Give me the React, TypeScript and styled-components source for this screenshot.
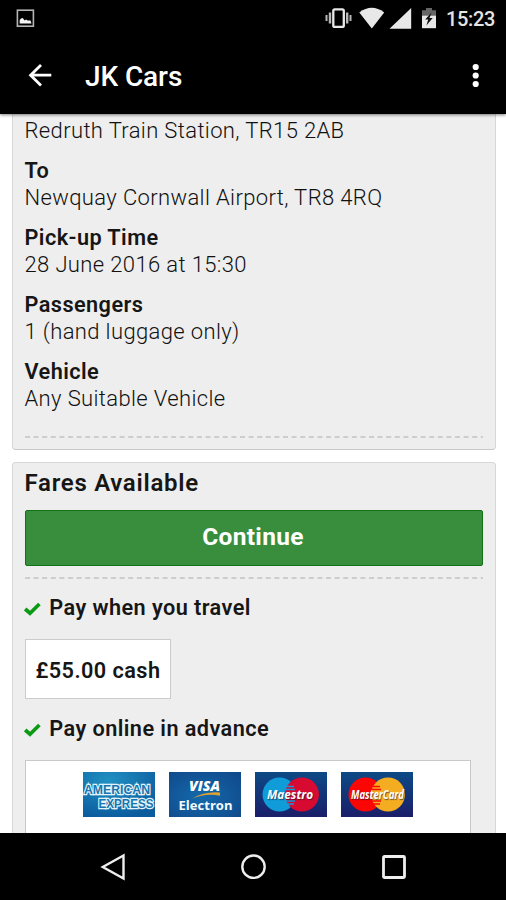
import React from "react";
import styled, { createGlobalStyle } from "styled-components";

const GlobalStyle = createGlobalStyle`
  * { box-sizing: border-box; }
  body { margin: 0; background: #fff; font-family: Roboto, "Liberation Sans", sans-serif; }
`;

const Screen = styled.div`
  width: 506px;
  height: 900px;
  display: flex;
  flex-direction: column;
  overflow: hidden;
  background: #fff;
`;

const StatusBar = styled.div`
  height: 37px;
  flex: none;
  display: flex;
  align-items: center;
  justify-content: space-between;
  padding: 0 11px 0 16px;
  background: #000;
`;

const StatusIcons = styled.div`
  display: flex;
  align-items: center;
  height: 37px;
  svg { display: block; }
`;

const Clock = styled.span`
  margin-left: 9px;
  padding-top: 1px;
  color: #e4e4e4;
  font-size: 20px;
  line-height: 24px;
  font-weight: 500;
  letter-spacing: -0.35px;
`;

const AppBar = styled.header`
  height: 77px;
  flex: none;
  display: flex;
  align-items: center;
  padding: 0 24px 0 28px;
  background: #000;
  z-index: 1;
  box-shadow: 0 1px 3px rgba(0, 0, 0, 0.5);
`;

const IconButton = styled.button`
  display: flex;
  padding: 0;
  border: 0;
  background: none;
  svg { display: block; }
`;

const AppTitle = styled.h1`
  flex: 1;
  margin: 3px 0 0 32px;
  color: #fff;
  font-size: 28px;
  font-weight: 500;
  line-height: 32px;
  letter-spacing: -0.1px;
`;

const Content = styled.main`
  height: 719px;
  flex: none;
  display: flex;
  flex-direction: column;
  gap: 12px;
  padding: 0 10px 0 12px;
  overflow: hidden;
`;

const Card = styled.section<{ $continued?: boolean }>`
  flex: none;
  height: ${(p) => (p.$continued ? "336px" : "400px")};
  padding: ${(p) => (p.$continued ? "3px 12px 0" : "6px 12px 0")};
  background: #eee;
  border: 1px solid #d6d6d6;
  border-top-width: ${(p) => (p.$continued ? 0 : "1px")};
  border-bottom-color: #c8c8c8;
  border-radius: ${(p) => (p.$continued ? "0 0 4px 4px" : "4px")};
`;

const Detail = styled.div`
  display: flex;
  flex-direction: column;
  margin: 0 0 13px -0.5px;
`;

const Label = styled.strong`
  font-size: 21.7px;
  font-weight: 600;
  line-height: 27px;
  color: #161616;
  letter-spacing: 0.43px;
`;

const Value = styled.span`
  font-size: 22px;
  font-weight: 350;
  line-height: 27px;
  color: #111;
  white-space: nowrap;
  letter-spacing: 0.37px;
`;

const DashedRule = styled.svg<{ $offset?: number }>`
  display: block;
  width: 458px;
  height: 2px;
  margin-top: ${(p) => p.$offset ?? 0}px;
`;

const SectionTitle = styled.h2`
  margin: 0 0 0 -0.5px;
  color: #161616;
  font-size: 24px;
  font-weight: 600;
  line-height: 28px;
  letter-spacing: 0.72px;
`;

const ContinueButton = styled.button`
  display: block;
  width: 458px;
  height: 56px;
  margin: 13px 0 11px;
  padding: 0 2px 3px 0;
  background: #388e3c;
  border: 1px solid #117316;
  border-radius: 2px;
  color: #fff;
  font: 700 24.5px/28px Roboto, sans-serif;
  letter-spacing: 0.3px;
`;

const PayOption = styled.div`
  display: flex;
  align-items: center;
  gap: 8px;
  margin-left: -0.7px;
  svg { display: block; margin-top: 2px; }
`;

const Payments = styled.div`
  display: flex;
  flex-direction: column;
  padding-top: 15px;
`;

const CashFare = styled.div`
  width: 146px;
  height: 60px;
  margin: 18px 0 16px;
  display: flex;
  align-items: center;
  justify-content: center;
  padding-top: 2px;
  background: #fff;
  border: 1px solid #ccc;
`;

const PaymentCards = styled.div`
  width: 446px;
  height: 90px;
  margin-top: 18px;
  display: flex;
  gap: 14px;
  padding: 11px 0 0 57px;
  background: #fff;
  border: 1px solid #c8c8c8;
  svg { display: block; }
`;

const CardName = styled.text`
  font: italic 700 12px "Open Sans", sans-serif;
  fill: #fff;
  text-shadow: 1px 1px 1px rgba(20, 20, 40, 0.6);
`;

const NavBar = styled.nav`
  height: 67px;
  flex: none;
  display: flex;
  justify-content: space-between;
  align-items: center;
  padding: 0 99px;
  background: #000;
`;

const Rule = ({ offset }: { offset?: number }) => (
  <DashedRule $offset={offset}>
    <line x1="0" y1="1" x2="458" y2="1" stroke="#c2c2c2" strokeWidth="1.6" strokeDasharray="5 3.6" />
  </DashedRule>
);

const Check = () => (
  <svg width="17" height="14" viewBox="0 0 17 14">
    <path d="M1.2 7 L6 11.2 L15.4 2" fill="none" stroke="#0b9a14" strokeWidth="3.7" />
  </svg>
);

const PictureIcon = () => (
  <svg width="19" height="19" viewBox="0 0 19 19">
    <rect x="1.4" y="1.2" width="16" height="16" fill="none" stroke="#b4b4b4" strokeWidth="1.6" />
    <path d="M3.7 14.5 V11 L5 9.5 L6.7 9 L8.7 11.5 L10 10.5 L11.5 11.5 H14.5 L15.5 14.5 Z" fill="#f4f4f4" />
  </svg>
);

const SystemIcons = () => (
  <svg width="114" height="37" viewBox="323 0 114 37" fill="#e8e8e8">
    <path d="M325.5 15h2v6h-2zM328.8 12.5h2.4v11h-2.4zM346 12.5h2.4v11H346zM349.5 15h2v6h-2z" fill="#b8b8b8" />
    <rect x="333.3" y="9.4" width="10.5" height="17.5" rx="1.5" fill="none" stroke="#e8e8e8" strokeWidth="2.3" />
    <path d="M359.3 12.4Q371.8 3.2 384.2 12.4L371.8 28.5Z" />
    <path d="M411.2 8V28.7H389.5Z" />
    <path d="M426 8h6v2.2h4v5.3h-14v-5.3h4z" fill="#666" />
    <path d="M422 15.5h14v12.7h-14z" />
    <path d="M431.5 12.5L425.2 19.4h3l-1.8 6 6.3-7.4h-3.2z" fill="#111" />
  </svg>
);

const AmexCard = () => (
  <svg width="72" height="45" viewBox="0 0 72 45">
    <defs>
      <radialGradient id="amex" cx="35%" cy="20%" r="85%">
        <stop offset="0" stopColor="#2090c2" />
        <stop offset="1" stopColor="#0b5b9d" />
      </radialGradient>
    </defs>
    <rect width="72" height="45" fill="url(#amex)" />
    <g
      fontFamily="Liberation Sans, Arial, sans-serif"
      fontWeight="700"
      fontSize="13"
      fill="#1975ad"
      stroke="#e3f3fa"
      strokeWidth="2.4"
      paintOrder="stroke"
    >
      <text x="1" y="21.7" textLength="66" lengthAdjust="spacingAndGlyphs">AMERICAN</text>
      <text x="15.5" y="36.2" textLength="55" lengthAdjust="spacingAndGlyphs">EXPRESS</text>
    </g>
  </svg>
);

const VisaCard = () => (
  <svg width="72" height="45" viewBox="0 0 72 45">
    <defs>
      <radialGradient id="visa" cx="45%" cy="55%" r="70%">
        <stop offset="0" stopColor="#1469ab" />
        <stop offset="1" stopColor="#104a8c" />
      </radialGradient>
    </defs>
    <rect width="72" height="45" fill="url(#visa)" />
    <text x="20" y="18.5" textLength="31" lengthAdjust="spacingAndGlyphs" fontFamily="Open Sans, sans-serif" fontStyle="italic" fontWeight="800" fontSize="14" fill="#fff">VISA</text>
    <path d="M23 26.5Q36 19.2 51 20.5V23.7Q37 20.8 23 26.5Z" fill="#dfa12f" />
    <text x="9.5" y="38" textLength="54" lengthAdjust="spacingAndGlyphs" fontFamily="Open Sans, sans-serif" fontWeight="700" fontSize="13" fill="#f2faff">Electron</text>
  </svg>
);

type CirclesCardProps = { id: string; name: string; left: string; right: string; x: number; length: number };

const CirclesCard = ({ id, name, left, right, x, length }: CirclesCardProps) => (
  <svg width="72" height="45" viewBox="0 0 72 45">
    <defs>
      <linearGradient id={id} x1="0" y1="0" x2="0" y2="1">
        <stop offset="0" stopColor="#0d4a86" />
        <stop offset="1" stopColor="#1a1e69" />
      </linearGradient>
    </defs>
    <rect width="72" height="45" fill={`url(#${id})`} />
    <circle cx="24.5" cy="22.5" r="17" fill={left} />
    <circle cx="47" cy="22.5" r="17" fill={right} />
    <path d="M32 14.5h7M31 17.5h9M31 29h9M32 32h7" stroke={left} strokeWidth="1.3" />
    <CardName x={x} y="27" textLength={length} lengthAdjust="spacingAndGlyphs">{name}</CardName>
  </svg>
);

export default function App() {
  return (
    <Screen>
      <GlobalStyle />
      <StatusBar>
        <StatusIcons><PictureIcon /></StatusIcons>
        <StatusIcons>
          <SystemIcons />
          <Clock>15:23</Clock>
        </StatusIcons>
      </StatusBar>
      <AppBar>
        <IconButton aria-label="Back">
          <svg width="25" height="24" viewBox="0 0 25 24" fill="none" stroke="#fff" strokeWidth="2.8">
            <path d="M23.3 11.2H3M13 1L2.6 11.2 13 21.4" />
          </svg>
        </IconButton>
        <AppTitle>JK Cars</AppTitle>
        <IconButton aria-label="More options">
          <svg width="12" height="26" viewBox="0 0 12 26" fill="#fff">
            <circle cx="5.7" cy="4" r="3.1" />
            <circle cx="5.7" cy="12.5" r="3.1" />
            <circle cx="5.7" cy="21" r="3.1" />
          </svg>
        </IconButton>
      </AppBar>
      <Content>
        <Card $continued>
          <Detail><Value>Redruth Train Station, TR15 2AB</Value></Detail>
          <Detail><Label>To</Label><Value>Newquay Cornwall Airport, TR8 4RQ</Value></Detail>
          <Detail><Label>Pick-up Time</Label><Value>28 June 2016 at 15:30</Value></Detail>
          <Detail><Label>Passengers</Label><Value>1 (hand luggage only)</Value></Detail>
          <Detail><Label>Vehicle</Label><Value>Any Suitable Vehicle</Value></Detail>
          <Rule offset={24} />
        </Card>
        <Card>
          <SectionTitle>Fares Available</SectionTitle>
          <ContinueButton>Continue</ContinueButton>
          <Rule />
          <Payments>
            <PayOption><Check /><Label>Pay when you travel</Label></PayOption>
            <CashFare><Label>£55.00 cash</Label></CashFare>
            <PayOption><Check /><Label>Pay online in advance</Label></PayOption>
            <PaymentCards>
              <AmexCard />
              <VisaCard />
              <CirclesCard id="maestro" name="Maestro" left="#109bd9" right="#d70a32" x={12} length={46} />
              <CirclesCard id="mastercard" name="MasterCard" left="#fb0505" right="#f4ac20" x={10} length={53} />
            </PaymentCards>
          </Payments>
        </Card>
      </Content>
      <NavBar>
        <IconButton aria-label="Back">
          <svg width="28" height="30" viewBox="0 0 28 30"><path d="M24.5 3.5V26.5L3.8 15Z" fill="none" stroke="#eee" strokeWidth="2.4" /></svg>
        </IconButton>
        <IconButton aria-label="Home">
          <svg width="28" height="28" viewBox="0 0 28 28"><circle cx="13.5" cy="13.7" r="11.2" fill="none" stroke="#eee" strokeWidth="2.4" /></svg>
        </IconButton>
        <IconButton aria-label="Recent apps">
          <svg width="26" height="26" viewBox="0 0 26 26"><rect x="2.5" y="2.5" width="21" height="21" rx="1" fill="none" stroke="#eee" strokeWidth="2.8" /></svg>
        </IconButton>
      </NavBar>
    </Screen>
  );
}
